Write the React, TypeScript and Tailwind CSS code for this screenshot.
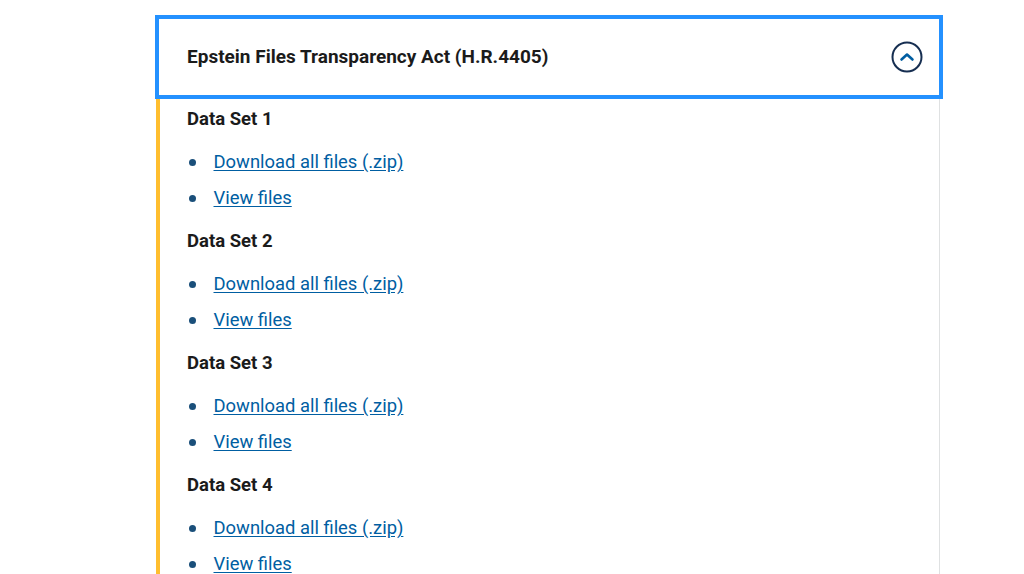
const sets = [1, 2, 3, 4];

const ChevronCircle = () => (
  <svg width="32" height="32" viewBox="0 0 32 32" fill="none">
    <circle cx="16" cy="16" r="14.5" stroke="#162e51" strokeWidth="2" />
    <path d="M10.5 18.5 L16 13.5 L21.5 18.5" stroke="#005ea2" strokeWidth="2.6" strokeLinecap="round" strokeLinejoin="round" />
  </svg>
);

export default function App() {
  return (
    <div className="h-[574px] w-[1024px] overflow-hidden bg-white font-['Roboto',sans-serif]">
      <div className="ml-[155px] pt-[15px]">
        {/* accordion header, focused */}
        <div className="flex h-[84px] w-[788px] items-center justify-between border-4 border-[#2491ff] pl-[28px] pr-[16px]">
          <h3 className="text-[19px] font-bold text-[#1b1b1b]">Epstein Files Transparency Act (H.R.4405)</h3>
          <ChevronCircle />
        </div>

        {/* accordion body */}
        <div className="ml-px w-[784px] border-r border-l-4 border-r-[#dfe1e2] border-l-[#ffbe2e] pt-[8px] pl-[27px]">
          {sets.map((n) => (
            <div key={n} className="pb-[13px]">
              <h4 className="text-[18.5px] leading-[24px] font-bold text-[#1b1b1b]">Data Set {n}</h4>
              <ul className="mt-[13px]">
                <li className="flex h-[36px] items-center">
                  <span className="ml-[1.5px] mr-[18px] h-[7px] w-[7px] rounded-full bg-[#1a4f7a]" />
                  <a href="#" className="text-[18.4px] text-[#005ea2] underline underline-offset-2">
                    Download all files (.zip)
                  </a>
                </li>
                <li className="flex h-[36px] items-center">
                  <span className="ml-[1.5px] mr-[18px] h-[7px] w-[7px] rounded-full bg-[#1a4f7a]" />
                  <a href="#" className="text-[18.4px] text-[#005ea2] underline underline-offset-2">
                    View files
                  </a>
                </li>
              </ul>
            </div>
          ))}
        </div>
      </div>
    </div>
  );
}
